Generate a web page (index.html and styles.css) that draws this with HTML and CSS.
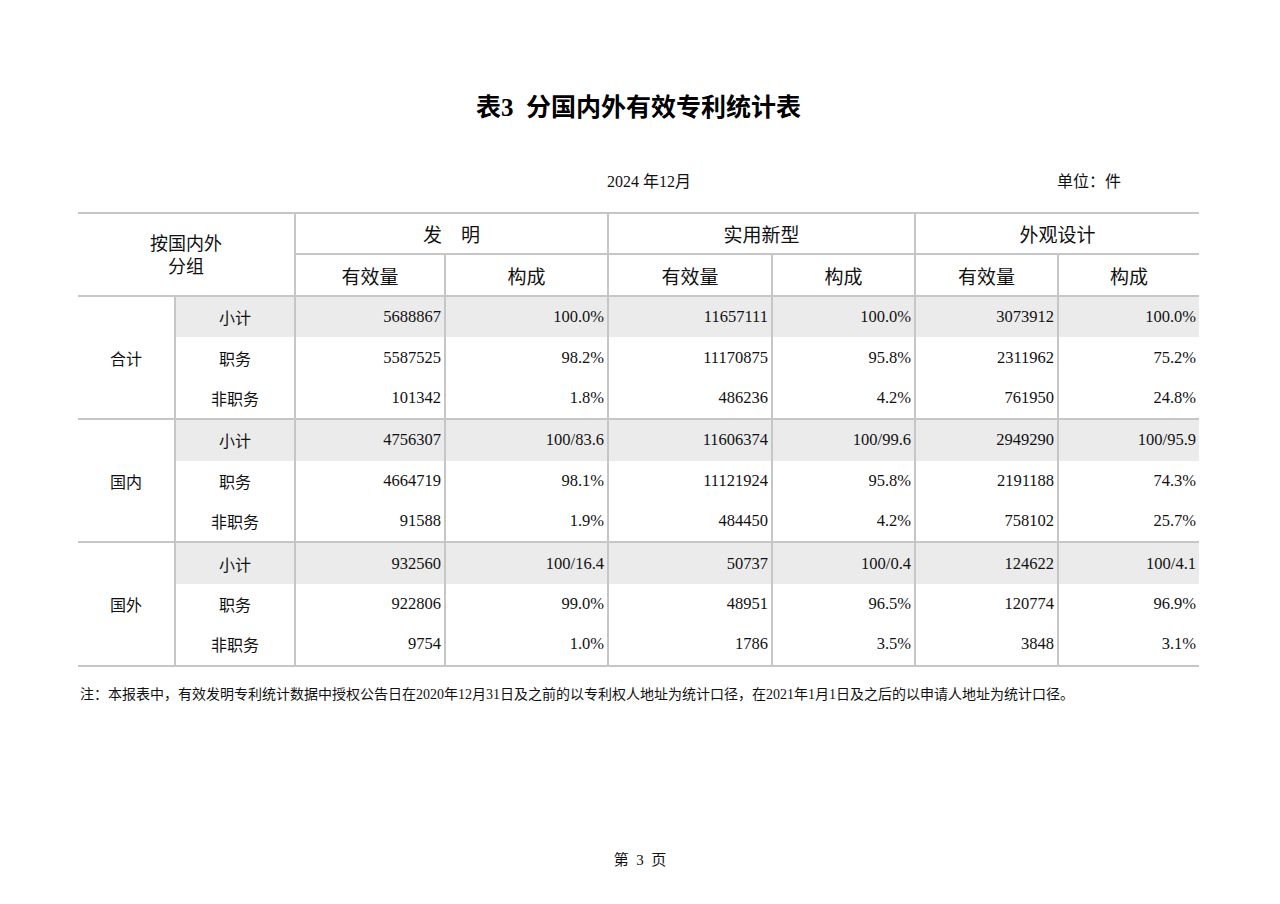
FILE: index.html
```html
<!DOCTYPE html>
<html lang="zh-CN">
<head>
<meta charset="utf-8">
<title>表3 分国内外有效专利统计表</title>
<link rel="stylesheet" href="styles.css">
</head>
<body>
<div class="page">
  <h1 class="title">表3&nbsp;&nbsp;分国内外有效专利统计表</h1>
  <div class="meta">
    <span class="date">2024 年12月</span>
    <span class="unit">单位：件</span>
  </div>
  <table class="stats">
    <colgroup>
      <col class="c1"><col class="c2"><col class="c3"><col class="c4"><col class="c5"><col class="c6"><col class="c7"><col class="c8">
    </colgroup>
    <thead>
      <tr class="h1">
        <th rowspan="2" colspan="2" class="grouphead">按国内外<br>分组</th>
        <th colspan="2">发　明</th>
        <th colspan="2">实用新型</th>
        <th colspan="2" class="last">外观设计</th>
      </tr>
      <tr class="h2">
        <th>有效量</th><th>构成</th>
        <th>有效量</th><th>构成</th>
        <th>有效量</th><th class="last">构成</th>
      </tr>
    </thead>
    <tbody class="grp">
      <tr class="sub"><td rowspan="3" class="gl">合计</td><td class="rl">小计</td><td>5688867</td><td>100.0%</td><td>11657111</td><td>100.0%</td><td>3073912</td><td class="last">100.0%</td></tr>
      <tr><td class="rl">职务</td><td>5587525</td><td>98.2%</td><td>11170875</td><td>95.8%</td><td>2311962</td><td class="last">75.2%</td></tr>
      <tr><td class="rl">非职务</td><td>101342</td><td>1.8%</td><td>486236</td><td>4.2%</td><td>761950</td><td class="last">24.8%</td></tr>
    </tbody>
    <tbody class="grp">
      <tr class="sub"><td rowspan="3" class="gl">国内</td><td class="rl">小计</td><td>4756307</td><td>100/83.6</td><td>11606374</td><td>100/99.6</td><td>2949290</td><td class="last">100/95.9</td></tr>
      <tr><td class="rl">职务</td><td>4664719</td><td>98.1%</td><td>11121924</td><td>95.8%</td><td>2191188</td><td class="last">74.3%</td></tr>
      <tr><td class="rl">非职务</td><td>91588</td><td>1.9%</td><td>484450</td><td>4.2%</td><td>758102</td><td class="last">25.7%</td></tr>
    </tbody>
    <tbody class="grp">
      <tr class="sub"><td rowspan="3" class="gl">国外</td><td class="rl">小计</td><td>932560</td><td>100/16.4</td><td>50737</td><td>100/0.4</td><td>124622</td><td class="last">100/4.1</td></tr>
      <tr><td class="rl">职务</td><td>922806</td><td>99.0%</td><td>48951</td><td>96.5%</td><td>120774</td><td class="last">96.9%</td></tr>
      <tr><td class="rl">非职务</td><td>9754</td><td>1.0%</td><td>1786</td><td>3.5%</td><td>3848</td><td class="last">3.1%</td></tr>
    </tbody>
  </table>
  <p class="note">注：本报表中，有效发明专利统计数据中授权公告日在2020年12月31日及之前的以专利权人地址为统计口径，在2021年1月1日及之后的以申请人地址为统计口径。</p>
  <div class="pageno">第&nbsp;&nbsp;3&nbsp;&nbsp;页</div>
</div>
</body>
</html>
```

FILE: styles.css
```css
html, body {
  margin: 0;
  padding: 0;
  background: #ffffff;
}

body {
  font-family: "Liberation Serif", "Noto Sans CJK SC", serif;
  color: #111111;
}

.page {
  width: 1280px;
  height: 904px;
  padding: 0 81px 0 78px;
  box-sizing: border-box;
  display: flex;
  flex-direction: column;
}

.title {
  margin: 92px 0 0 0;
  height: 32px;
  line-height: 32px;
  font-size: 25px;
  font-weight: bold;
  text-align: center;
  color: #000000;
  padding-left: 0;
}

.meta {
  display: flex;
  align-items: center;
  margin-top: 48px;
  height: 20px;
  font-size: 16px;
  line-height: 20px;
}

.date {
  margin-left: 529px;
}

.unit {
  margin-left: auto;
  margin-right: 78px;
}

.stats {
  margin-top: 20px;
  width: 1121px;
  border-collapse: collapse;
  table-layout: fixed;
  border-top: 2px solid #c6c6c6;
}

.c1 { width: 97px; }
.c2 { width: 120px; }
.c3 { width: 150px; }
.c4 { width: 163px; }
.c5 { width: 164px; }
.c6 { width: 143px; }
.c7 { width: 143px; }
.c8 { width: 141px; }

.stats th {
  font-weight: normal;
  font-size: 19px;
  height: 39px;
  padding: 0;
  text-align: center;
  vertical-align: middle;
  border-left: 2px solid #c6c6c6;
  border-bottom: 2px solid #c6c6c6;
  color: #111111;
}

.stats .h2 th {
  height: 40px;
}

.stats th.grouphead {
  border-left: none;
  font-size: 18px;
  line-height: 23px;
  padding-top: 2px;
}

.stats td {
  height: 40.4px;
  padding: 0 3px 0 0;
  font-size: 16.5px;
  text-align: right;
  vertical-align: middle;
  border-left: 2px solid #c6c6c6;
}

.stats td.gl {
  border-left: none;
  text-align: center;
  padding: 0;
  font-size: 16px;
  background: #ffffff;
}

.stats td.rl {
  text-align: center;
  padding: 0;
  font-size: 16px;
}

.stats tbody.grp {
  border-bottom: 2px solid #c6c6c6;
}

.stats tr.sub td {
  background: #ebebeb;
}

.stats tr.sub td.gl {
  background: #ffffff;
}

.note {
  margin: 18px 0 0 2px;
  font-size: 14px;
  line-height: 20px;
  color: #111111;
}

.pageno {
  margin-top: 145px;
  text-align: center;
  font-size: 15px;
  line-height: 20px;
  padding-left: 3px;
}
```
